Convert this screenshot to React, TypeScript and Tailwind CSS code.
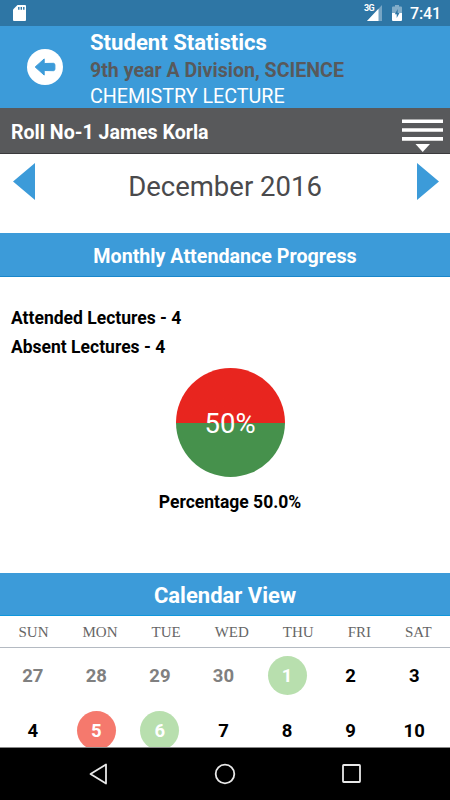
import { clsx } from 'clsx'

interface Day {
  label: number
  status?: 'present' | 'absent'
  outside?: boolean
}

const WEEKDAYS = ['SUN', 'MON', 'TUE', 'WED', 'THU', 'FRI', 'SAT']

const DAYS: Day[] = [
  { label: 27, outside: true },
  { label: 28, outside: true },
  { label: 29, outside: true },
  { label: 30, outside: true },
  { label: 1, status: 'present' },
  { label: 2 },
  { label: 3 },
  { label: 4 },
  { label: 5, status: 'absent' },
  { label: 6, status: 'present' },
  { label: 7 },
  { label: 8 },
  { label: 9 },
  { label: 10 },
]

function StatusBar() {
  return (
    <div className="flex h-[26px] shrink-0 items-center bg-[#2e76a5] pl-[13px] pr-[9px] text-white">
      <svg width="13" height="16" viewBox="0 0 13 16">
        <path d="M4.5 0H12a1 1 0 0 1 1 1v14a1 1 0 0 1-1 1H1a1 1 0 0 1-1-1V4.500z" fill="#fff" />
        <path d="M5.800 2v2.800M8.300 2v2.800M10.800 2v2.800" stroke="#2e76a5" strokeWidth="1.400" />
      </svg>
      <div className="ml-auto flex items-center">
        <div className="relative h-4 w-5">
          <svg width="16" height="16" viewBox="0 0 16 16" className="absolute left-[3.500px] top-0">
            <path d="M15 0v16H0z" fill="#77a5c4" />
            <path d="M11.500 3.700V16H0z" fill="#fff" />
          </svg>
          <span className="absolute left-0 top-0 bg-[#2e76a5] text-[9px] font-bold leading-[7px] tracking-[-0.5px]">3G</span>
        </div>
        <svg width="10" height="16" viewBox="0 0 10 16" className="ml-2">
          <path d="M3 0h4v1.500h2a1 1 0 0 1 1 1V8H0V2.500a1 1 0 0 1 1-1h2z" fill="#82adc9" />
          <path d="M0 8h10v7a1 1 0 0 1-1 1H1a1 1 0 0 1-1-1z" fill="#fff" />
          <path d="M5.700 4 2.800 9.300h1.900V13L7.500 8H5.700z" fill="#2e76a5" />
        </svg>
        <span className="ml-2 mt-[2px] text-[16px] font-medium leading-4 tracking-[-0.1px]">7:41</span>
      </div>
    </div>
  )
}

function Header() {
  return (
    <header className="flex h-[82px] shrink-0 bg-[#3c9bd9] pl-[27px]">
      <svg width="36" height="36" viewBox="0 0 36 36" className="mt-[23px]">
        <circle cx="18" cy="18" r="18" fill="#fff" />
        <path
          d="M8.200 18 17.200 9.900v4.600l9.300-.2q1.400.2 1.400 1.700v4q0 1.500-1.400 1.700l-9.300-.2v4.600z"
          fill="#3c9bd9"
          stroke="#3c9bd9"
          strokeWidth="1"
          strokeLinejoin="round"
        />
      </svg>
      <div className="ml-[27px] whitespace-nowrap pt-[2px] text-white">
        <h1 className="text-[22.1px] font-bold leading-7">Student Statistics</h1>
        <p className="text-[19.6px] font-bold leading-[30px] text-[#58595b]">9th year A Division, SCIENCE</p>
        <p className="text-[19.7px] leading-[22px]">CHEMISTRY LECTURE</p>
      </div>
    </header>
  )
}

function StudentBar() {
  return (
    <div className="flex h-[46px] shrink-0 justify-between border-b border-[#3a3a3c] bg-[#58595b] pl-[11px] pr-[7px] text-white">
      <span className="text-[19.6px] font-bold leading-[49px]">Roll No-1 James Korla</span>
      <svg width="41" height="34" viewBox="0 0 41 34" className="mt-[11px]">
        <path d="M0 2.300h41M0 11h41M0 19.900h41" stroke="#fff" strokeWidth="3.600" />
        <path d="M13.500 25h14.500l-7.300 8z" fill="#fff" />
      </svg>
    </div>
  )
}

function MonthPicker() {
  return (
    <div className="flex h-[79px] shrink-0 justify-between bg-white pl-[13px] pr-[11px]">
      <svg width="22" height="37" viewBox="0 0 22 37" className="mt-[9px]">
        <path d="M22 0v37L0 18.500z" fill="#3c9bd9" />
      </svg>
      <span className="-ml-[2px] text-[27.5px] leading-[65px] text-[#4a4a4c]">December 2016</span>
      <svg width="22" height="37" viewBox="0 0 22 37" className="mt-[9px]">
        <path d="M0 0v37l22-18.500z" fill="#3c9bd9" />
      </svg>
    </div>
  )
}

function Progress() {
  return (
    <section className="flex h-[296px] shrink-0 flex-col bg-white text-black">
      <div className="pl-[11px] pt-[27px] text-[17.5px] font-bold leading-[29px]">
        <p>Attended Lectures - 4</p>
        <p>Absent Lectures - 4</p>
      </div>
      <div className="ml-[175.500px] mt-[6px] flex size-[109px] items-center justify-center rounded-full bg-linear-to-b from-[#e8251f] from-50% to-[#46914c] to-50%">
        <span className="pt-[3px] text-[27.5px] leading-none text-white">50%</span>
      </div>
      <p className="mt-[10px] pl-[10px] text-center text-[17.5px] font-bold leading-[30px]">Percentage 50.0%</p>
    </section>
  )
}

function Calendar() {
  return (
    <section className="flex min-h-0 flex-1 flex-col overflow-hidden bg-white">
      <div className="flex h-8 shrink-0 gap-[34px] border-b border-[#b4bac2] pl-[18.500px] font-['Liberation_Serif',serif] text-[15px] leading-[33px] text-[#666]">
        {WEEKDAYS.map(day => (
          <span key={day}>{day}</span>
        ))}
      </div>
      <div className="grid w-[446px] shrink-0 auto-rows-[55px] grid-cols-7 pl-px">
        {DAYS.map(day => (
          <div key={day.label} className="flex items-center justify-center">
            <span
              className={clsx(
                'flex size-[39px] items-center justify-center rounded-full pt-[3px] text-[18.5px] font-bold',
                day.outside && 'text-[#808080]',
                day.status === 'present' && 'bg-[#b8dfae] text-white',
                day.status === 'absent' && 'bg-[#f5796d] text-white',
                !day.outside && !day.status && 'text-black',
              )}
            >
              {day.label}
            </span>
          </div>
        ))}
      </div>
    </section>
  )
}

function NavBar() {
  return (
    <nav className="flex h-[53px] shrink-0 items-center justify-between border-t border-[#888] bg-black pl-[89px] pr-[89px]">
      <svg width="19" height="22" viewBox="0 0 19 22" fill="none" stroke="#e8e8e8" strokeWidth="1.800" strokeLinejoin="round">
        <path d="M17 1.500v19L1.500 11z" />
      </svg>
      <svg width="22" height="22" viewBox="0 0 22 22" fill="none" stroke="#e8e8e8" strokeWidth="1.800">
        <circle cx="11" cy="11" r="9.300" />
      </svg>
      <svg width="19" height="22" viewBox="0 0 19 22" fill="none" stroke="#e8e8e8" strokeWidth="1.800">
        <rect x="1" y="2" width="17" height="17" rx="0.700" />
      </svg>
    </nav>
  )
}

export default function App() {
  return (
    <div className="flex h-[800px] w-[450px] flex-col overflow-hidden bg-white font-[Roboto,sans-serif]">
      <StatusBar />
      <Header />
      <StudentBar />
      <MonthPicker />
      <h2 className="h-11 shrink-0 border-b border-[#1a86ca] bg-[#3c9bd9] text-center text-[19.7px] font-bold leading-[48px] text-white">
        Monthly Attendance Progress
      </h2>
      <Progress />
      <h2 className="h-[43px] shrink-0 border-b border-[#0f97dc] bg-[#3c9bd9] text-center text-[22px] font-bold leading-[45px] text-white">
        Calendar View
      </h2>
      <Calendar />
      <NavBar />
    </div>
  )
}
